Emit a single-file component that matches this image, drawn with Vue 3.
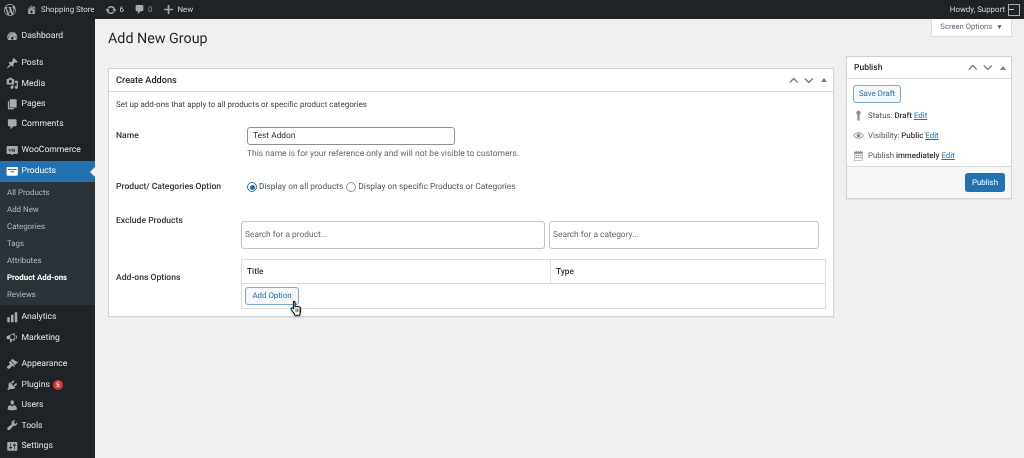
<script setup>
const P = {
  wp: 'M20 10c0-5.51-4.49-10-10-10C4.48 0 0 4.49 0 10c0 5.52 4.48 10 10 10 5.51 0 10-4.48 10-10zM7.78 15.37L4.37 6.22c.55-.02 1.17-.08 1.17-.08.5-.06.44-1.13-.06-1.11 0 0-1.45.11-2.37.11-.18 0-.37 0-.58-.01C4.12 2.69 6.87 1.11 10 1.11c2.33 0 4.45.87 6.05 2.34-.68-.11-1.65.39-1.65 1.58 0 .74.45 1.36.9 2.1.35.61.55 1.36.55 2.46 0 1.49-1.4 5-1.4 5l-3.03-8.37c.54-.02.82-.17.82-.17.5-.05.44-1.25-.06-1.22 0 0-1.44.12-2.38.12-.87 0-2.33-.12-2.33-.12-.5-.03-.56 1.2-.06 1.22l.92.08 1.26 3.41zM17.41 10c.24-.64.74-1.87.43-4.25.7 1.29 1.05 2.71 1.05 4.25 0 3.29-1.73 6.24-4.4 7.78.97-2.59 1.94-5.2 2.92-7.78zM6.1 18.09C3.12 16.65 1.11 13.53 1.11 10c0-1.3.23-2.48.72-3.59C3.25 10.3 4.67 14.2 6.1 18.09zm4.03-6.63l2.58 6.98c-.86.29-1.76.45-2.71.45-.79 0-1.57-.11-2.29-.33.81-2.38 1.62-4.74 2.42-7.1z',
  home: 'M16 8.5l1.53 1.53-1.06 1.06L10 4.62l-6.47 6.47-1.06-1.06L10 2.5l4 4v-2h2v4zm-6-2.46l6 5.99V18H4v-5.97zM12 17v-5H8v5h4z',
  update: 'M10.2 3.28c3.53 0 6.43 2.61 6.92 6h2.08l-3.5 4-3.5-4h2.32c-.45-1.97-2.21-3.45-4.32-3.45-1.45 0-2.73.71-3.54 1.78L4.95 5.66C6.23 4.2 8.11 3.28 10.2 3.28zm-.4 13.44c-3.52 0-6.43-2.61-6.92-6H.8l3.5-4c1.17 1.33 2.33 2.67 3.5 4H5.48c.45 1.97 2.21 3.45 4.32 3.45 1.45 0 2.73-.71 3.54-1.78l1.71 1.95c-1.28 1.46-3.15 2.38-5.25 2.38z',
  comment: 'M5 2h10c1.1 0 2 .9 2 2v7c0 1.1-.9 2-2 2h-3l-5 5v-5H5c-1.1 0-2-.9-2-2V4c0-1.1.9-2 2-2z',
  plus: 'M18 8.5v3h-6.5V18h-3v-6.5H2v-3h6.5V2h3v6.5z',
  dashboard: 'M3.76 16h12.48c1.1-1.37 1.76-3.11 1.76-5 0-4.42-3.58-8-8-8s-8 3.58-8 8c0 1.89.66 3.63 1.76 5zM10 4c.55 0 1 .45 1 1s-.45 1-1 1-1-.45-1-1 .45-1 1-1zM6 6c.55 0 1 .45 1 1s-.45 1-1 1-1-.45-1-1 .45-1 1-1zm8.01 1l-2.7 4.3c.4.53.69 1.1.69 1.7 0 1.1-.9 2-2 2s-2-.9-2-2 .9-2 2-2c.12 0 .24.01.36.03zM4 10c.55 0 1 .45 1 1s-.45 1-1 1-1-.45-1-1 .45-1 1-1zm12 0c.55 0 1 .45 1 1s-.45 1-1 1-1-.45-1-1 .45-1 1-1z',
  post: 'M10.44 3.02l1.82-1.82 6.36 6.35-1.83 1.82c-1.05-.68-2.48-.57-3.41.36l-.75.75c-.92.93-1.04 2.35-.35 3.41l-1.83 1.82-2.41-2.41-2.8 2.79c-.42.42-3.38 2.71-3.8 2.29s1.86-3.39 2.28-3.81l2.79-2.79L4.1 9.36l1.83-1.82c1.05.69 2.48.57 3.4-.36l.75-.75c.93-.92 1.05-2.35.36-3.41z',
  media: 'M13 11V4c0-.55-.45-1-1-1h-1.67L9 1H5L3.67 3H2c-.55 0-1 .45-1 1v7c0 .55.45 1 1 1h10c.55 0 1-.45 1-1zM7 4.5c1.38 0 2.5 1.12 2.5 2.5S8.38 9.5 7 9.5 4.5 8.38 4.5 7 5.62 4.5 7 4.5zM14 6h5v10.5c0 1.38-1.12 2.5-2.5 2.5S14 17.88 14 16.5s1.12-2.5 2.5-2.5c.17 0 .34.02.5.05V9h-3V6zm-4 8.05V13h2v3.5c0 1.38-1.12 2.5-2.5 2.5S7 17.88 7 16.5 8.12 14 9.5 14c.17 0 .34.02.5.05z',
  pages: 'M6 15V2h11v13H6zm-1 1h8v2H3V5h2v11z',
  woo: 'M3 3h14c1.1 0 2 .9 2 2v9c0 1.1-.9 2-2 2h-5l-2 2-2-2H3c-1.1 0-2-.9-2-2V5c0-1.1.9-2 2-2zm1 4.5l1 5 1.5-3 1.5 3 1-5H8.2l-.5 2.4L6.5 8 5.3 9.9 4.8 7.5zm8 0a2.5 2.5 0 100 5 2.5 2.5 0 000-5zm0 1.3a1.2 1.2 0 110 2.4 1.2 1.2 0 010-2.4z',
  products: 'M2.5 3h15c.8 0 1.5.7 1.5 1.5v11c0 .8-.7 1.5-1.5 1.5h-15C1.700 17 1 16.300 1 15.500v-11C1 3.700 1.700 3 2.500 3zM3 6.500V8h14V6.500zM7 10v1.500h6V10z',
  analytics: 'M18 18V2h-4v16zM12 18V6H8v12zM6 18v-8H2v8z',
  marketing: 'M3 7.500L14 3v13L9 14l1 4H7l-1.200-5H3a2 2 0 01-2-2V9.500a2 2 0 012-2zM15.500 6.500a3.500 3.500 0 010 6.500zM10 6a3.500 3.500 0 100 7 3.500 3.500 0 000-7z',
  appearance: 'M14.48 11.06L7.41 3.99l1.5-1.5c.5-.56 2.3-.47 3.51.32 1.21.8 1.43 1.28 2.91 2.1 1.18.64 2.45 1.26 4.45.85zm-.71.71L6.7 4.7 4.93 6.47c-.39.39-.39 1.02 0 1.41l1.06 1.06c.39.39.39 1.03 0 1.42-.6.6-1.43 1.11-2.21 1.69-.35.26-.7.53-1.01.84C1.43 13.23.99 15.2 2.330 16.540c1.340 1.330 3.300.9 4.640-.44.31-.31.59-.65.84-1 .58-.78 1.090-1.610 1.690-2.220.39-.39 1.020-.39 1.410 0l1.060 1.060c.39.39 1.020.39 1.410 0z',
  plugins: 'M13.11 4.36L9.87 7.6 8 5.73l3.24-3.24c.35-.34 1.050-.2 1.560.32.52.51.66 1.210.31 1.550zm-8 1.770l.91-1.120 9.010 9.010-1.190.84c-.71.71-2.630 1.160-3.820 1.160H6.140L4.900 17.260c-.59.59-1.540.59-2.120 0-.59-.58-.59-1.530 0-2.120l1.240-1.240v-3.880c0-1.130.4-3.190 1.090-3.890zm7.260 3.970l3.240-3.240c.34-.35 1.040-.21 1.550.31.52.51.66 1.210.31 1.550l-3.240 3.250z',
  users: 'M10 9.250c-2.270 0-2.730-3.440-2.730-3.440C7 4.020 7.820 2 9.970 2c2.160 0 2.980 2.020 2.710 3.810 0 0-.41 3.440-2.680 3.440zm0 2.570L12.720 10c2.390 0 4.520 2.330 4.520 4.530v2.490s-3.650 1.130-7.240 1.130c-3.650 0-7.240-1.130-7.240-1.130v-2.490c0-2.250 1.940-4.480 4.470-4.480z',
  tools: 'M16.680 9.770c-1.340 1.340-3.300 1.670-4.950.99l-5.410 6.520c-.99.99-2.590.99-3.580 0s-.99-2.590 0-3.570l6.520-5.420c-.68-1.650-.35-3.610.99-4.950 1.280-1.280 3.120-1.620 4.720-1.060l-2.890 2.890 2.820 2.820 2.860-2.870c.53 1.580.18 3.390-1.080 4.650z',
  settings: 'M18 16V4c0-.55-.45-1-1-1H3c-.55 0-1 .45-1 1v12c0 .55.45 1 1 1h14c.55 0 1-.45 1-1zM8 11h1c.55 0 1 .45 1 1s-.45 1-1 1H8v1.500c0 .28-.22.5-.5.5s-.5-.22-.5-.5V13H6c-.55 0-1-.45-1-1s.45-1 1-1h1V5.500c0-.28.22-.5.5-.5s.5.22.5.5V11zm5-2h-1c-.55 0-1-.45-1-1s.45-1 1-1h1V5.500c0-.28.22-.5.5-.5s.5.22.5.500V7h1c.55 0 1 .45 1 1s-.45 1-1 1h-1v5.500c0 .28-.22.5-.5.5s-.5-.22-.5-.5V9z',
  pin: 'M10 1a4 4 0 012 7.460V19H8V8.460A4 4 0 0110 1z',
  eye: 'M10 4c4 0 7.500 2.300 9.500 6-2 3.700-5.500 6-9.500 6S2.500 13.700.5 10C2.500 6.300 6 4 10 4zM10 5.500C7 5.500 4 7.200 2.300 10 4 12.800 7 14.500 10 14.500s6-1.700 7.700-4.500C16 7.200 13 5.500 10 5.500zM10 6.500a3.500 3.500 0 110 7 3.500 3.500 0 010-7z',
  calendar: 'M3 3h2V1.500h2V3h2V1.500h2V3h2V1.500h2V3h2c.6 0 1 .4 1 1v14c0 .6-.4 1-1 1H3c-.6 0-1-.4-1-1V4c0-.6.4-1 1-1zm0 4v11h14V7zm1.500 1.500h2.500V11H4.500zm4.250 0h2.500V11h-2.500zm4.250 0h2.500V11H13zM4.500 12.500h2.500V15H4.500zm4.250 0h2.500V15h-2.500zm4.250 0h2.500V15H13z'
}
const sections = [
  { cls: 'sec-a', items: [{ label: 'Dashboard', icon: 'dashboard' }] },
  { cls: 'sec-b', items: [
    { label: 'Posts', icon: 'post' },
    { label: 'Media', icon: 'media' },
    { label: 'Pages', icon: 'pages' },
    { label: 'Comments', icon: 'comment' }
  ] }
]
const submenu = ['All Products', 'Add New', 'Categories', 'Tags', 'Attributes', 'Product Add-ons', 'Reviews']
const lower = [
  { cls: 'sec-c', items: [
    { label: 'Analytics', icon: 'analytics' },
    { label: 'Marketing', icon: 'marketing' }
  ] },
  { cls: 'sec-d', items: [
    { label: 'Appearance', icon: 'appearance' },
    { label: 'Plugins', icon: 'plugins', badge: '5' },
    { label: 'Users', icon: 'users' },
    { label: 'Tools', icon: 'tools' },
    { label: 'Settings', icon: 'settings' }
  ] }
]
</script>

<template>
  <div class="page">
    <header class="bar">
      <div class="bar-left">
        <svg class="bar-wp" viewBox="0 0 20 20"><path :d="P.wp" /></svg>
        <span class="bar-item site"><svg viewBox="0 0 20 20"><path :d="P.home" /></svg>Shopping Store</span>
        <span class="bar-item upd"><svg viewBox="0 0 20 20"><path :d="P.update" /></svg>6</span>
        <span class="bar-item cmt"><svg viewBox="0 0 20 20"><path :d="P.comment" /></svg><em>0</em></span>
        <span class="bar-item new"><svg viewBox="0 0 20 20"><path :d="P.plus" /></svg>New</span>
      </div>
      <div class="bar-right">
        <span>Howdy, Support</span>
        <span class="avatar"><i></i></span>
      </div>
    </header>

    <div class="shell">
      <nav class="side">
        <div v-for="s in sections" :key="s.cls" :class="s.cls">
          <div v-for="m in s.items" :key="m.label" class="row">
            <svg viewBox="0 0 20 20"><path :d="P[m.icon]" fill-rule="evenodd" /></svg>
            <span>{{ m.label }}</span>
          </div>
        </div>
        <div class="row woo-row">
          <svg viewBox="0 0 20 20"><path :d="P.woo" fill-rule="evenodd" /></svg>
          <span>WooCommerce</span>
        </div>
        <div class="row active">
          <svg viewBox="0 0 20 20"><path :d="P.products" fill-rule="evenodd" /></svg>
          <span>Products</span>
        </div>
        <div class="sub">
          <div v-for="s in submenu" :key="s" class="sub-row" :class="{ cur: s === 'Product Add-ons' }">{{ s }}</div>
        </div>
        <div v-for="s in lower" :key="s.cls" :class="s.cls">
          <div v-for="m in s.items" :key="m.label" class="row">
            <svg viewBox="0 0 20 20"><path :d="P[m.icon]" fill-rule="evenodd" /></svg>
            <span>{{ m.label }}</span>
            <b v-if="m.badge" class="badge">{{ m.badge }}</b>
          </div>
        </div>
      </nav>

      <main class="main">
        <div class="tab-line"><div class="screen-tab">Screen Options <span class="caret">▼</span></div></div>
        <h1>Add New Group</h1>
        <div class="columns">
          <section class="box addons">
            <div class="box-head">
              <h2>Create Addons</h2>
              <div class="handles">
                <svg viewBox="0 0 12 8"><path d="M1 6.500l5-5 5 5" /></svg>
                <svg viewBox="0 0 12 8"><path d="M1 1.500l5 5 5-5" /></svg>
                <i class="tri"></i>
              </div>
            </div>
            <div class="addons-body">
              <p class="intro">Set up add-ons that apply to all products or specific product categories</p>
              <div class="form-row name-row">
                <label>Name</label>
                <div class="name-field">
                  <input class="name-input" value="Test Addon" readonly />
                  <p class="help">This name is for your reference only and will not be visible to customers.</p>
                </div>
              </div>
              <div class="form-row radio-row">
                <label>Product/ Categories Option</label>
                <div class="radios">
                  <i class="radio on"></i><span class="r1">Display on all products</span>
                  <i class="radio"></i><span>Display on specific Products or Categories</span>
                </div>
              </div>
              <div class="form-row exclude-row">
                <label>Exclude Products</label>
                <div class="searches">
                  <input class="search s1" placeholder="Search for a product..." readonly />
                  <input class="search s2" placeholder="Search for a category..." readonly />
                </div>
              </div>
              <div class="form-row options-row">
                <label>Add-ons Options</label>
                <div class="table">
                  <div class="thead"><div class="th t1">Title</div><div class="th t2">Type</div></div>
                  <div class="tbody">
                    <span class="btn-add">Add Option
                      <svg class="hand" viewBox="0 0 14 18">
                        <path d="M4.200 1.200c.8 0 1.300.6 1.300 1.400v4.600l.9-.1c.3-.5 1.400-.5 1.700.1.500-.4 1.400-.3 1.700.3.600-.2 1.500.1 1.600 1 .2 1.500.2 3.200-.3 4.800-.3 1-.6 1.600-.6 2.900H5.200c-.1-1.200-.8-2-1.500-2.900L1.400 10.300c-.5-.8-.3-1.600.3-1.900.6-.3 1.200-.1 1.600.4l.6.8V2.600c0-.8-.6-1.400.3-1.400z" fill="#fff" stroke="#111" stroke-width="1.100" stroke-linejoin="round"/>
                        <path d="M6.500 9v4M8.300 9v4M10 9v4" stroke="#111" stroke-width=".7" fill="none"/>
                      </svg>
                    </span>
                  </div>
                </div>
              </div>
            </div>
          </section>

          <aside class="box publish">
            <div class="box-head pub-head">
              <h2>Publish</h2>
              <div class="handles">
                <svg viewBox="0 0 12 8"><path d="M1 6.500l5-5 5 5" /></svg>
                <svg viewBox="0 0 12 8"><path d="M1 1.500l5 5 5-5" /></svg>
                <i class="tri"></i>
              </div>
            </div>
            <div class="pub-body">
              <span class="btn-draft">Save Draft</span>
              <div class="pub-line l1"><svg class="pi-pin" viewBox="0 0 20 20"><path :d="P.pin" /></svg><span>Status: <b>Draft</b> <a>Edit</a></span></div>
              <div class="pub-line l2"><svg viewBox="0 0 20 20"><path :d="P.eye" fill-rule="evenodd" /></svg><span>Visibility: <b>Public</b> <a>Edit</a></span></div>
              <div class="pub-line l3"><svg viewBox="0 0 20 20"><path :d="P.calendar" fill-rule="evenodd" /></svg><span>Publish <b>immediately</b> <a>Edit</a></span></div>
            </div>
            <div class="pub-foot"><span class="btn-pub">Publish</span></div>
          </aside>
        </div>
      </main>
    </div>
  </div>
</template>

<style>
html, body { margin: 0; overflow: hidden; background: #f0f0f1; }
</style>

<style scoped>
.page { width: 1024px; height: 458px; overflow: hidden; font-family: Roboto, "Open Sans", sans-serif; text-rendering: geometricPrecision; font-size: 8.4px; color: #3c434a; background: #f0f0f1; display: flex; flex-direction: column; filter: blur(.3px); }
input { text-rendering: geometricPrecision; }
.bar { height: 19px; flex: none; background: #1d2327; color: #d5d7d9; display: flex; justify-content: space-between; align-items: center; font-size: 7.900px; }
.bar svg { fill: #a7aaad; }
.bar-left { display: flex; align-items: center; }
.bar-wp { width: 12px; height: 12px; margin: 0 0 0 4px; }
.bar-item { display: flex; align-items: center; }
.bar-item svg { width: 11px; height: 11px; }
.site { margin-left: 10px; gap: 4px; }
.upd { margin-left: 10px; gap: 3px; }
.upd svg { width: 12px; height: 12px; }
.cmt { margin-left: 10px; gap: 3px; }
.cmt em { font-style: normal; color: #8a8f94; }
.new { margin-left: 11px; gap: 3px; }
.bar-right { display: flex; align-items: center; gap: 3px; margin-right: 4px; }
.avatar { width: 10px; height: 10px; border: 1px solid #a7aaad; display: flex; align-items: center; }
.avatar i { width: 5px; height: 1px; background: #c3c4c7; }
.shell { flex: 1; display: flex; min-height: 0; }
.side { width: 95px; flex: none; background: #1d2327; display: flex; flex-direction: column; color: #f0f0f1; font-size: 8.600px; }
.row { height: 20.4px; display: flex; align-items: center; padding-left: 5.500px; box-sizing: border-box; flex: none; position: relative; color: #e4e5e6; }
.row svg { width: 12.500px; height: 12.500px; fill: #a7aaad; flex: none; margin-right: 3.500px; }
.sec-a { margin-top: 7.300px; }
.sec-b { margin-top: 6.400px; }
.woo-row { margin-top: 5.600px; }
.active { height: 21.400px; background: #2271b1; color: #fff; }
.active svg { fill: #fff; }
.active::after { content: ""; position: absolute; right: 0; top: 6px; border: 5px solid transparent; border-right-color: #f0f0f1; border-left-width: 0; }
.sub { background: #2c3338; padding: 3.200px 0 1.400px 7px; height: 123.200px; box-sizing: border-box; flex: none; font-size: 7.900px; }
.sub-row { height: 16.900px; line-height: 16.900px; color: #b4b9be; }
.sub-row.cur { color: #fff; font-weight: 700; }
.sec-c { margin-top: 1.800px; }
.sec-d { margin-top: 6.400px; }
.badge { width: 10px; height: 10px; border-radius: 50%; background: #d63638; color: #fff; font-size: 6.500px; font-weight: 500; display: flex; align-items: center; justify-content: center; margin-left: 3px; }
.main { flex: 1; min-width: 0; padding-left: 13px; position: relative; }
.tab-line { display: flex; justify-content: flex-end; padding-right: 12px; height: 0; }
.screen-tab { width: 81px; height: 17.500px; box-sizing: border-box; background: #fff; border: 1px solid #dcdcde; border-top: 0; text-align: center; line-height: 16px; color: #646970; flex: none; font-size: 7.700px; }
.caret { font-size: 6.500px; color: #50575e; margin-left: 2px; }
h1 { margin: 0; padding-top: 10px; font-size: 14.300px; line-height: 20px; font-weight: 400; color: #1d2327; height: 27px; }
.columns { display: flex; align-items: flex-start; gap: 12px; padding-right: 12px; }
.box { background: #fff; border: 1px solid #d2d3d5; box-shadow: 0 1px 1px rgba(0,0,0,.04); box-sizing: border-box; }
.addons { width: 726px; height: 249px; margin-top: 12px; }
.publish { width: 166px; height: 143px; display: flex; flex-direction: column; }
.box-head { height: 22px; border-bottom: 1px solid #dcdcde; display: flex; align-items: center; justify-content: space-between; padding: 0 6px 0 7px; }
h2 { margin: 0; font-size: 9.200px; font-weight: 500; color: #1d2327; }
.handles { display: flex; align-items: center; gap: 5px; }
.handles svg { width: 9.500px; height: 7px; fill: none; stroke: #787c82; stroke-width: 1.700px; }
.handles .tri { width: 0; height: 0; border: 3px solid transparent; border-top: 0; border-bottom: 4px solid #787c82; margin-left: 3px; }
.intro { margin: 0; padding: 7px 0 0 7px; line-height: 12px; font-size: 8px; }
.form-row { display: flex; }
.form-row label { width: 132px; padding-left: 7px; font-weight: 500; color: #2c3338; flex: none; box-sizing: border-box; font-size: 8.600px; }
.name-row { margin-top: 16px; height: 53px; }
.name-row label { padding-top: 3px; line-height: 12px; }
.name-field { margin-left: 6px; }
.name-input { display: block; width: 208px; height: 18px; box-sizing: border-box; border: 1px solid #8c8f94; border-radius: 3px; padding: 0 5px; font: inherit; color: #2c3338; outline: 0; background: #fff; }
.help { margin: 2.500px 0 0; line-height: 12px; color: #646970; font-size: 8.500px; }
.radio-row { height: 35px; }
.radio-row label { line-height: 12px; padding-top: 1px; }
.radios { display: flex; align-items: center; height: 14px; margin-left: 6px; color: #50575e; font-size: 8.400px; }
.radio { width: 10px; height: 10px; box-sizing: border-box; border: 1px solid #8c8f94; border-radius: 50%; flex: none; margin-right: 2px; display: flex; align-items: center; justify-content: center; background: #fff; }
.radio.on { border-color: #2271b1; }
.radio.on::before { content: ""; width: 5px; height: 5px; border-radius: 50%; background: #2271b1; }
.r1 { margin-right: 3px; }
.exclude-row { height: 44px; }
.exclude-row label { line-height: 12px; }
.searches { display: flex; gap: 4px; padding-top: 6px; align-items: flex-start; }
.search { width: 304px; height: 27.500px; box-sizing: border-box; border: 1px solid #c3c4c7; border-radius: 3px; padding: 0 3px; font: inherit; outline: 0; background: #fff; }
.search.s2 { width: 270px; }
.search::placeholder { color: #646970; opacity: 1; }
.options-row label { padding-top: 13px; line-height: 12px; }
.table { width: 585px; height: 50px; box-sizing: border-box; border: 1px solid #dcdcde; }
.thead { height: 23px; display: flex; border-bottom: 1px solid #dcdcde; }
.th { font-weight: 500; color: #2c3338; line-height: 25px; padding-left: 5px; box-sizing: border-box; font-size: 8.300px; height: 23px; }
.t1 { width: 309px; border-right: 1px solid #dcdcde; }
.tbody { padding: 3px 0 0 3px; }
.btn-add { display: inline-block; position: relative; width: 54px; height: 18px; line-height: 16px; box-sizing: border-box; border: 1px solid #7aa9cf; border-radius: 3px; background: #f6f7f7; color: #2271b1; text-align: center; font-size: 7.900px; }
.hand { position: absolute; left: 44px; top: 12px; width: 13px; height: 17px; filter: drop-shadow(0 1px 1px rgba(0,0,0,.35)); }
.pub-head { height: 21px; padding-right: 5px; }
.pub-head h2 { font-size: 8.500px; padding-top: 1px; }
.pub-body { flex: 1; padding: 6px 6px 0; display: flex; flex-direction: column; font-size: 7.900px; }
.btn-draft { display: block; width: 48px; height: 18px; line-height: 16px; box-sizing: border-box; border: 1px solid #7aa9cf; border-radius: 3px; background: #f6f7f7; color: #2271b1; text-align: center; }
.pub-line { height: 20px; display: flex; align-items: center; color: #50575e; }
.pub-line svg { width: 11px; height: 11px; fill: #8c8f94; margin-right: 4px; flex: none; }
.pub-line b { font-weight: 500; color: #2c3338; }
.pub-line a { color: #2271b1; text-decoration: underline; }
.l1 { margin-top: 2.500px; }
.pub-foot { height: 32px; background: #f6f7f7; border-top: 1px solid #dcdcde; box-sizing: border-box; display: flex; justify-content: flex-end; align-items: center; padding-right: 6px; }
.btn-pub { width: 40px; height: 19px; line-height: 19px; background: #2271b1; color: #fff; border-radius: 3px; text-align: center; font-size: 7.900px; }
</style>
